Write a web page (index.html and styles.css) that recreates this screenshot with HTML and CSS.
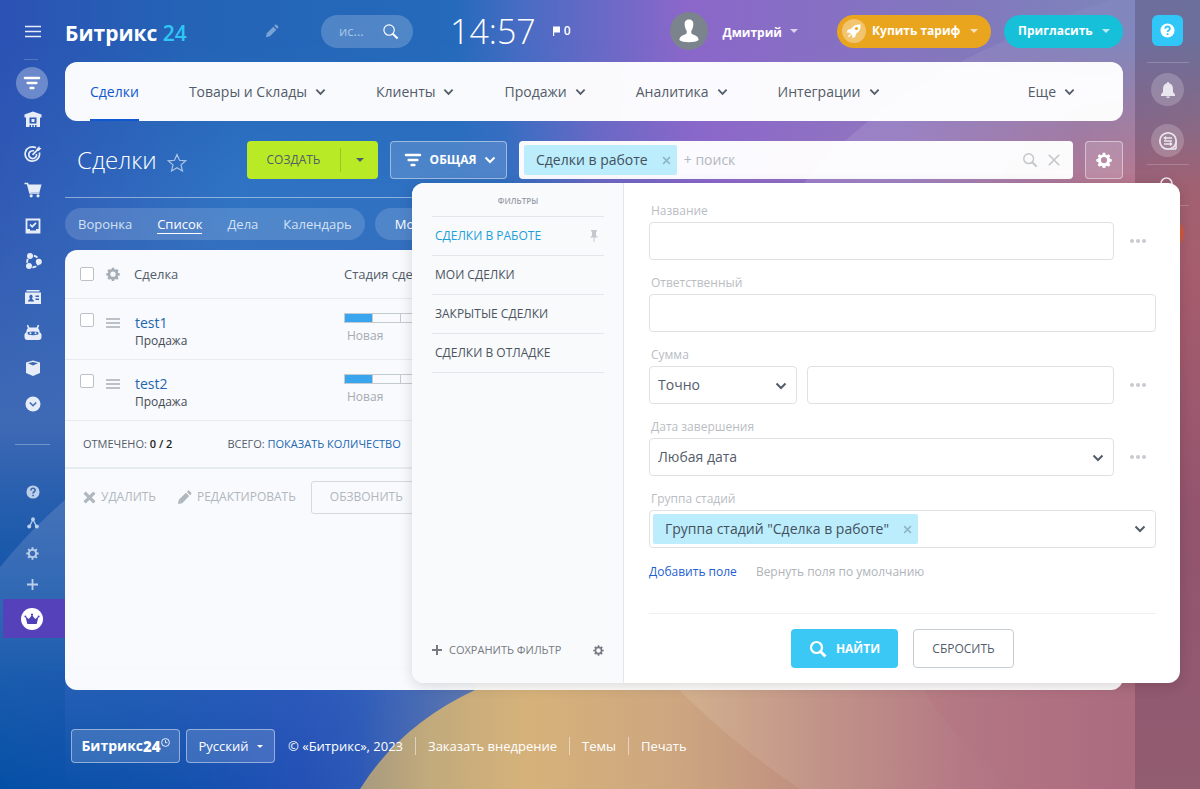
FILE: index.html
```html
<!DOCTYPE html>
<html lang="ru">
<head>
<meta charset="utf-8">
<title>Сделки</title>
<link rel="stylesheet" href="styles.css">
</head>
<body>
<svg class="defs" aria-hidden="true">
  <symbol id="gear" viewBox="0 0 20 20"><path fill-rule="evenodd" fill="currentColor" d="M8.4 1h3.2l.5 2.3 1.6.7 2-1.3 2.2 2.3-1.2 2 .6 1.5 2.400.5v3l-2.400.6-.6 1.500 1.300 2-2.200 2.200-2.100-1.200-1.600.6-.5 2.300H8.400l-.5-2.300-1.600-.6-2 1.200-2.300-2.200 1.300-2-.6-1.500L.4 12V9l2.300-.5.600-1.500L2 5l2.300-2.300 2 1.300 1.600-.7zM10 6.400a3.800 3.800 0 1 0 0 7.600 3.800 3.800 0 0 0 0-7.600z"/></symbol>
  <symbol id="gear-thin" viewBox="0 0 20 20"><circle cx="10" cy="10" r="5.600" fill="none" stroke="currentColor" stroke-width="3"/><path d="M10 .5v4M10 15.500v4M.5 10h4M15.500 10h4M3.300 3.300l2.800 2.800M13.900 13.900l2.800 2.800M3.300 16.700l2.800-2.800M13.900 6.100l2.800-2.800" stroke="currentColor" stroke-width="3"/></symbol>
  <symbol id="chev" viewBox="0 0 12 8"><path d="M1.500 1.500 6 6l4.500-4.500" fill="none" stroke="currentColor" stroke-width="2"/></symbol>
  <symbol id="caret" viewBox="0 0 8 4"><path d="M0 0h8L4 4z" fill="currentColor"/></symbol>
  <symbol id="lens" viewBox="0 0 18 18"><circle cx="7.500" cy="7.500" r="5.500" fill="none" stroke="currentColor" stroke-width="var(--w,1.600)"/><path d="m11.500 11.500 5 5" stroke="currentColor" stroke-width="var(--w2,2.200)"/></symbol>
  <symbol id="cross" viewBox="0 0 12 12"><path d="m1.500 1.500 9 9m0-9-9 9" stroke="currentColor" stroke-width="var(--w,2)"/></symbol>
  <symbol id="funnel" viewBox="0 0 18 14"><path d="M2 2h14M4.700 7h8.600M7.700 12h2.600" stroke="currentColor" stroke-width="2.600" stroke-linecap="round"/></symbol>
  <symbol id="help" viewBox="0 0 16 16"><circle cx="8" cy="8" r="7.500" fill="currentColor"/><path d="M5.600 6.200c.1-3.300 5-3.200 4.900-.2 0 1.700-2.400 1.800-2.400 3.600M8.100 11v1.800" fill="none" stroke="var(--q,#3f69b0)" stroke-width="1.900"/></symbol>
  <symbol id="pencil" viewBox="0 0 16 16"><path d="m1 15 1-4.500L9.500 3 13 6.500 5.500 14zM10.500 2l1.200-1.200q.8-.6 1.500 0l2 2q.6.800 0 1.500L14 5.500z" fill="currentColor"/></symbol>
</svg>

<svg class="art" viewBox="0 0 1200 789" preserveAspectRatio="none" aria-hidden="true">
  <defs>
    <linearGradient id="base" x1="0" y1="0" x2="1" y2="0"><stop offset="0" stop-color="#2c52b4"/><stop offset=".15" stop-color="#2463b6"/><stop offset=".38" stop-color="#256abb"/><stop offset=".43" stop-color="#466cc3"/><stop offset=".57" stop-color="#8b67ca"/><stop offset=".8" stop-color="#8178bd"/><stop offset="1" stop-color="#7d8abc"/></linearGradient>
    <linearGradient id="mid" x1="0" y1="0" x2="1" y2="0"><stop offset="0" stop-color="#305ab5"/><stop offset=".2" stop-color="#3074c4"/><stop offset=".42" stop-color="#2f6fc1"/><stop offset=".5" stop-color="#6c68c4"/><stop offset=".6" stop-color="#8d68ca"/><stop offset=".75" stop-color="#9a78bd"/><stop offset=".9" stop-color="#b2708c"/><stop offset="1" stop-color="#c87a83"/></linearGradient>
    <linearGradient id="fade" x1="0" y1="0" x2="0" y2="1"><stop offset=".05" stop-color="#000"/><stop offset=".25" stop-color="#fff"/></linearGradient>
    <mask id="m"><rect width="1200" height="789" fill="url(#fade)"/></mask>
    <linearGradient id="left" x1="0" y1="0" x2="0" y2="1"><stop offset="0" stop-color="#3d6ab5" stop-opacity="0"/><stop offset=".4" stop-color="#3f6ab5"/><stop offset=".75" stop-color="#2260b0"/><stop offset="1" stop-color="#0450a6"/></linearGradient>
    <linearGradient id="dusk" x1="0" y1="0" x2="0" y2="1"><stop offset="0" stop-color="#0a4fa5" stop-opacity="0"/><stop offset="1" stop-color="#0a4fa5" stop-opacity=".6"/></linearGradient>
    <linearGradient id="arc" x1="0" y1="0" x2="0" y2="1"><stop offset="0" stop-color="#fff" stop-opacity=".08"/><stop offset="1" stop-color="#fff" stop-opacity="0"/></linearGradient>
    <linearGradient id="footx" x1="0" y1="0" x2="500" y2="0" gradientUnits="userSpaceOnUse"><stop offset="0" stop-color="#2450b6" stop-opacity="0"/><stop offset=".25" stop-color="#1a52b2" stop-opacity=".4"/><stop offset=".6" stop-color="#2450b6"/><stop offset=".72" stop-color="#2c58b6"/><stop offset="1" stop-color="#7a84a4"/></linearGradient>
    <linearGradient id="footy" x1="0" y1="670" x2="0" y2="789" gradientUnits="userSpaceOnUse"><stop offset="0" stop-color="#3b6cc4" stop-opacity=".35"/><stop offset="1" stop-color="#3b6cc4" stop-opacity="0"/></linearGradient>
    <linearGradient id="sand" x1="360" y1="0" x2="1200" y2="0" gradientUnits="userSpaceOnUse"><stop offset="0" stop-color="#a79a80"/><stop offset=".08" stop-color="#c1aa7c"/><stop offset=".2" stop-color="#d6b27a"/><stop offset=".38" stop-color="#cda680"/><stop offset=".55" stop-color="#bd8c80"/><stop offset=".72" stop-color="#b37683"/><stop offset=".9" stop-color="#ac6c80"/><stop offset="1" stop-color="#ac6c80"/></linearGradient>
    <linearGradient id="rose" x1="0" y1="0" x2="0" y2="1"><stop offset="0" stop-color="#cd707a" stop-opacity="0"/><stop offset=".22" stop-color="#d0707a"/><stop offset=".6" stop-color="#b5637c"/><stop offset="1" stop-color="#b3707f"/></linearGradient>
    <linearGradient id="edge" x1="0" y1="0" x2="1" y2="0"><stop offset="0" stop-color="#fff" stop-opacity=".12"/><stop offset="1" stop-color="#fff" stop-opacity="0"/></linearGradient>
  </defs>
  <rect width="1200" height="789" fill="url(#base)"/>
  <rect width="1200" height="789" fill="url(#mid)" mask="url(#m)"/>
  <path d="M1110 0C960 50 860 110 790 200H1200V0z" fill="url(#edge)"/>
  <rect y="190" width="500" height="599" fill="url(#left)"/>
  <path d="M0 420V567Q30 530 65 500V420z" fill="url(#dusk)"/>
  <path d="M0 567Q30 530 65 500V680H0z" fill="url(#arc)"/>
  <rect y="670" width="500" height="119" fill="url(#footx)"/>
  <rect x="65" y="670" width="435" height="119" fill="url(#footy)"/>
  <path d="M360 789Q400 725 475 690V670H1200V789z" fill="url(#sand)"/>
  <path d="M660 670Q720 735 800 789H1014Q950 740 912 670z" fill="url(#edge)"/>
  <rect x="1135" y="130" width="65" height="659" fill="url(#rose)"/>
</svg>

<div class="app">
  <nav class="side" aria-label="Главное меню">
    <button class="ico burger" aria-label="Меню"><svg width="18" height="14" viewBox="0 0 18 14"><path d="M1 1.500h16M1 6.500h16M1 11.500h16" stroke="currentColor" stroke-width="1.500"/></svg></button>
    <span class="dash"></span>
    <a class="ico current" href="#" aria-label="CRM"><svg width="18" height="14"><use href="#funnel"/></svg></a>
    <div class="modules">
      <a class="ico" href="#" aria-label="Склад"><svg width="18" height="18" viewBox="0 0 18 18"><path fill-rule="evenodd" fill="currentColor" d="M9 1.500 17.500 4.500v3H16V17h-3.500v-2h-1.500v2H9.700v-2H8.300v2H7v-2H5.500v2H2V7.500H.5v-3zM5.500 7.500v6h7v-6zM7.500 9h3v3h-3z"/></svg></a>
      <a class="ico" href="#" aria-label="Маркетинг"><svg width="18" height="18" viewBox="0 0 18 18"><g fill="none" stroke="currentColor" stroke-width="1.700"><path d="M12 2.800A7.200 7.200 0 1 0 15.400 7.500"/><path d="M10 6a3.900 3.900 0 1 0 2.500 3"/><path d="m8.500 9.800 6-6"/></g><path d="M12.500 4 15.300 1l.3 1.800 1.900.4L14.700 6l-2-.2z" fill="currentColor"/></svg></a>
      <a class="ico" href="#" aria-label="Магазин"><svg width="18" height="16" viewBox="0 0 18 16"><path d="M.5 1.500H3.500L6 11h9.500" fill="none" stroke="currentColor" stroke-width="1.600"/><path d="M3.800 2.500H17.500L15.500 10H6z" fill="currentColor"/><circle cx="7.200" cy="13.800" r="1.600" fill="currentColor"/><circle cx="14" cy="13.800" r="1.600" fill="currentColor"/></svg></a>
      <a class="ico" href="#" aria-label="Задачи"><svg width="16" height="16" viewBox="0 0 16 16"><path d="M1.500 1.500h13v13h-13z" fill="none" stroke="currentColor" stroke-width="1.800"/><path d="m5 6.500 2.200 2.200 3.800-3.900" fill="none" stroke="currentColor" stroke-width="1.700"/><path d="M2 11h3v1.500h6V11h3v3H2z" fill="currentColor"/></svg></a>
      <a class="ico" href="#" aria-label="Автоматизация"><svg width="18" height="18" viewBox="0 0 18 18"><circle cx="9" cy="9.500" r="5.800" fill="none" stroke="currentColor" stroke-width="1.900" stroke-dasharray="4 1.500"/><g fill="currentColor"><circle cx="6" cy="4" r="3"/><circle cx="5" cy="14" r="3"/><circle cx="14.800" cy="9.800" r="3"/></g></svg></a>
      <a class="ico" href="#" aria-label="Контакты"><svg width="18" height="16" viewBox="0 0 18 16"><path fill-rule="evenodd" fill="currentColor" d="M2.500 1h13v1.500h-13zM1 3.500h16V15H1zM4 12.500h6c0-2-2-1.800-2-3 1.200-1 .8-3.700-1-3.700S4.800 8.500 6 9.500c0 1.200-2 1-2 3zM11.500 6.500V8H15V6.500zm0 3V11H15V9.500z"/></svg></a>
      <a class="ico" href="#" aria-label="Роботы"><svg width="18" height="17" viewBox="0 0 18 17"><path d="m3.500 1 1.500 4M14.500 1 13 5" stroke="currentColor" stroke-width="1.600"/><path fill-rule="evenodd" fill="currentColor" d="M5 3.500h8q2.500 1 2.800 5Q18 9 17.500 13q0 3-3 3h-11q-3 0-3-3Q0 9 2.200 8.500 2.500 4.500 5 3.500zM4 8q-1 1.200 0 2.500Q9 12 14 10.500q1-1.300 0-2.500Q9 6.800 4 8z"/><circle cx="6.500" cy="9.300" r="1" fill="currentColor"/><circle cx="11.500" cy="9.300" r="1" fill="currentColor"/></svg></a>
      <a class="ico" href="#" aria-label="Товары"><svg width="16" height="16" viewBox="0 0 16 16"><path fill="currentColor" d="M8 .5 15 2.500V13L8 16 1 13V2.500z"/><path d="M3 3.200 8 5.500l5-2.300L8 2z" fill="#3a66b4"/></svg></a>
      <a class="ico" href="#" aria-label="Ещё"><svg width="16" height="16" viewBox="0 0 16 16"><circle cx="8" cy="8" r="7.500" fill="currentColor"/><path d="m4.800 6.500 3.200 3.200 3.200-3.200" fill="none" stroke="#3f6ab5" stroke-width="1.600"/></svg></a>
    </div>
    <span class="dash wide"></span>
    <div class="tools">
      <a class="ico" href="#" aria-label="Помощь"><svg width="14" height="14"><use href="#help"/></svg></a>
      <a class="ico" href="#" aria-label="Карта"><svg width="12" height="12" viewBox="0 0 12 12"><path d="M2.500 9.500 6 2.500l3.500 7" fill="none" stroke="currentColor" stroke-width="1.300"/><g fill="currentColor"><circle cx="6" cy="2.200" r="1.900"/><circle cx="2.200" cy="9.600" r="2"/><circle cx="9.800" cy="9.600" r="2"/></g></svg></a>
      <a class="ico" href="#" aria-label="Настройки"><svg width="13" height="13"><use href="#gear-thin"/></svg></a>
      <a class="ico" href="#" aria-label="Добавить"><svg width="11" height="11" viewBox="0 0 11 11"><path d="M5.500 0v11M0 5.500h11" stroke="currentColor" stroke-width="1.800"/></svg></a>
    </div>
    <a class="premium" href="#" aria-label="Тариф"><svg width="22" height="22" viewBox="0 0 22 22"><circle cx="11" cy="11" r="11" fill="#fff"/><path d="m4.500 8.500 3.300 2.500L11 7l3.200 4 3.300-2.500-1.800 7.500H6.300z" fill="#5040b8"/><circle cx="4.400" cy="8.500" r="1" fill="#5040b8"/><circle cx="11" cy="6.700" r="1.100" fill="#5040b8"/><circle cx="17.600" cy="8.500" r="1" fill="#5040b8"/></svg></a>
  </nav>

  <main class="main">
    <header class="top">
      <div class="brand"><a class="logo" href="#">Битрикс <span>24</span></a>
        <button class="plain edit" aria-label="Изменить"><svg width="14" height="14"><use href="#pencil"/></svg></button></div>
      <label class="find"><input type="search" placeholder="ис..." aria-label="искать"><svg width="17" height="17"><use href="#lens"/></svg></label>
      <time class="clock">14:57</time>
      <span class="flag"><svg width="7" height="10" viewBox="0 0 7 10"><path d="M0 .5h7v6H1.200V10H0z" fill="#fff"/></svg>0</span>
      <div class="account">
        <button class="user"><svg width="38" height="38" viewBox="0 0 38 38"><circle cx="19" cy="19" r="19" fill="#7b848c"/><path d="M19 7.500c-3.500 0-4.700 2.500-4.300 5.500.3 3 1.300 5 2 5.800v2.400c-1.500 2-7.300 2-7.300 6.800 3 3 16.300 3 19.200 0 0-4.800-5.800-4.800-7.300-6.800v-2.400c.8-.8 1.700-2.800 2-5.800.4-3-.8-5.500-4.300-5.500z" fill="#fff"/></svg><span>Дмитрий</span><svg class="car" width="8" height="4"><use href="#caret"/></svg></button>
        <button class="pill buy"><svg width="24" height="24" viewBox="0 0 24 24"><circle cx="12" cy="12" r="12" fill="#fff" opacity=".35"/><path d="M18.500 5.500c-5-.5-8 2-9.500 4.500l-3 .5-1.500 3 3 .3 2.500 2.500.5 3 2.800-1.500.7-3c3-2 5-4.500 4.500-9.300zM7.500 15l-2 3.500L9 16.700z" fill="#fff"/><circle cx="14.500" cy="9.500" r="1.600" fill="#eda41f"/></svg><span>Купить тариф</span><svg class="car" width="8" height="4"><use href="#caret"/></svg></button>
        <button class="pill invite"><span>Пригласить</span><svg class="car" width="8" height="4"><use href="#caret"/></svg></button>
      </div>
    </header>

    <nav class="menu" aria-label="Разделы CRM">
      <a class="on" href="#">Сделки</a>
      <a href="#">Товары и Склады<svg width="11" height="8"><use href="#chev"/></svg></a>
      <a href="#">Клиенты<svg width="11" height="8"><use href="#chev"/></svg></a>
      <a href="#">Продажи<svg width="11" height="8"><use href="#chev"/></svg></a>
      <a href="#">Аналитика<svg width="11" height="8"><use href="#chev"/></svg></a>
      <a href="#">Интеграции<svg width="11" height="8"><use href="#chev"/></svg></a>
      <a class="last" href="#">Еще<svg width="11" height="8"><use href="#chev"/></svg></a>
    </nav>

    <div class="bar">
      <div class="heading"><h1>Сделки</h1>
        <button class="plain star" aria-label="В избранное"><svg width="20" height="20" viewBox="0 0 20 20"><path d="m10 1.500 2.500 5.800 6.200.5-4.700 4.100 1.500 6.200L10 14.800l-5.500 3.300L6 11.900 1.300 7.800l6.200-.5z" fill="none" stroke="currentColor" stroke-width="1.200"/></svg></button></div>
      <div class="create"><button>СОЗДАТЬ</button><button class="more" aria-label="Ещё варианты"><svg width="8" height="4"><use href="#caret"/></svg></button></div>
      <button class="ghost funnel"><svg width="18" height="14"><use href="#funnel"/></svg>ОБЩАЯ<svg width="12" height="8"><use href="#chev"/></svg></button>
      <div class="searchbox">
        <div class="searchline">
          <span class="tag">Сделки в работе<button class="plain" aria-label="Убрать"><svg width="9" height="9"><use href="#cross"/></svg></button></span>
          <input type="text" placeholder="+ поиск" aria-label="Поиск">
          <button class="plain" aria-label="Искать"><svg width="16" height="16"><use href="#lens"/></svg></button>
          <button class="plain thin" aria-label="Очистить"><svg width="14" height="14"><use href="#cross"/></svg></button>
        </div>

        <section class="popup" aria-label="Фильтр">
          <aside class="presets">
            <h2>ФИЛЬТРЫ</h2>
            <ul>
              <li class="on"><a href="#">СДЕЛКИ В РАБОТЕ</a><svg width="8" height="14" viewBox="0 0 8 14"><path d="M1 1h6v1.500H6v4l2 2H0l2-2v-4H1zM3.500 8h1v5h-1z" fill="currentColor"/></svg></li>
              <li><a href="#">МОИ СДЕЛКИ</a></li>
              <li><a href="#">ЗАКРЫТЫЕ СДЕЛКИ</a></li>
              <li><a href="#">СДЕЛКИ В ОТЛАДКЕ</a></li>
            </ul>
            <div class="save"><button class="plain"><svg width="10" height="10" viewBox="0 0 10 10"><path d="M5 0v10M0 5h10" stroke="currentColor" stroke-width="2"/></svg>СОХРАНИТЬ ФИЛЬТР</button><button class="plain" aria-label="Настройки фильтра"><svg width="11" height="11"><use href="#gear-thin"/></svg></button></div>
          </aside>
          <form class="fields">
            <div class="field"><label for="f1">Название</label><div class="line"><input id="f1" type="text"><button type="button" class="plain dots" aria-label="Ещё"><i></i><i></i><i></i></button></div></div>
            <div class="field"><label for="f2">Ответственный</label><div class="line"><input id="f2" type="text"></div></div>
            <div class="field"><label for="f3">Сумма</label><div class="line"><span class="pick small"><select id="f3"><option>Точно</option></select><svg width="12" height="8"><use href="#chev"/></svg></span><input type="text" aria-label="Значение суммы"><button type="button" class="plain dots" aria-label="Ещё"><i></i><i></i><i></i></button></div></div>
            <div class="field"><label for="f4">Дата завершения</label><div class="line"><span class="pick"><select id="f4"><option>Любая дата</option></select><svg width="12" height="8"><use href="#chev"/></svg></span><button type="button" class="plain dots" aria-label="Ещё"><i></i><i></i><i></i></button></div></div>
            <div class="field"><label for="f5">Группа стадий</label><div class="line"><div class="multi"><span class="tag">Группа стадий "Сделка в работе"<button type="button" class="plain" aria-label="Убрать"><svg width="9" height="9"><use href="#cross"/></svg></button></span><button type="button" id="f5" class="plain drop" aria-label="Открыть список"><svg width="12" height="8"><use href="#chev"/></svg></button></div></div></div>
            <div class="links"><a href="#">Добавить поле</a><a class="mute" href="#">Вернуть поля по умолчанию</a></div>
            <div class="submit"><button type="button" class="go"><svg width="18" height="18"><use href="#lens"/></svg>НАЙТИ</button><button type="reset" class="reset">СБРОСИТЬ</button></div>
          </form>
        </section>
      </div>
      <button class="ghost cog" aria-label="Настройки"><svg width="16" height="16"><use href="#gear"/></svg></button>
    </div>

    <div class="views">
      <nav class="tabs"><a href="#">Воронка</a><a class="on" href="#">Список</a><a href="#">Дела</a><a href="#">Календарь</a></nav>
      <nav class="tabs second"><a class="bright" href="#">Мои</a></nav>
    </div>

    <section class="panel">
      <table class="deals">
        <colgroup><col class="c1"><col class="c2"><col class="c3"><col></colgroup>
        <thead><tr><th><input type="checkbox" aria-label="Выбрать все"></th><th><svg class="tgear" width="14" height="14"><use href="#gear"/></svg></th><th>Сделка</th><th>Стадия сделки</th></tr></thead>
        <tbody>
          <tr><td><input type="checkbox" aria-label="test1"></td><td><span class="lines"></span></td><td><a href="#">test1</a><small>Продажа</small></td><td><span class="stage"><i class="full"></i><i></i><i></i><i></i><i></i></span><em>Новая</em></td></tr>
          <tr><td><input type="checkbox" aria-label="test2"></td><td><span class="lines"></span></td><td><a href="#">test2</a><small>Продажа</small></td><td><span class="stage"><i class="full"></i><i></i><i></i><i></i><i></i></span><em>Новая</em></td></tr>
        </tbody>
      </table>
      <div class="totals"><span>ОТМЕЧЕНО: <b>0 / 2</b></span><span>ВСЕГО: <a href="#">ПОКАЗАТЬ КОЛИЧЕСТВО</a></span></div>
      <div class="actions">
        <button class="plain"><svg class="fat" width="13" height="13"><use href="#cross"/></svg>УДАЛИТЬ</button>
        <button class="plain"><svg width="15" height="15"><use href="#pencil"/></svg>РЕДАКТИРОВАТЬ</button>
        <button class="call">ОБЗВОНИТЬ</button>
      </div>
    </section>

    <footer class="foot">
      <a class="ghost b24" href="#">Битрикс<b>24</b><svg width="9" height="9" viewBox="0 0 9 9"><circle cx="4.500" cy="4.500" r="3.900" fill="none" stroke="#fff" stroke-width=".9"/><path d="M4.500 2.300v2.400h1.800" fill="none" stroke="#fff" stroke-width=".9"/></svg></a>
      <button class="ghost lang">Русский<svg width="6" height="3"><use href="#caret"/></svg></button>
      <span class="copy">© «Битрикс», 2023</span>
      <a href="#">Заказать внедрение</a><a href="#">Темы</a><a href="#">Печать</a>
    </footer>
  </main>

  <aside class="right">
    <button class="helpbtn" aria-label="Помощь"><svg width="15" height="15"><use href="#help"/></svg></button>
    <span class="rule"></span>
    <button class="round" aria-label="Уведомления"><svg width="14" height="16" viewBox="0 0 14 16"><path d="M7 0q1 0 1.200 1.300Q12 2.500 12 7v3l2 2.500V14H0v-1.500L2 10V7q0-4.500 3.800-5.700Q6 0 7 0zM5 14.500h4Q8.500 16 7 16t-2-1.500z" fill="currentColor"/></svg></button>
    <button class="round" aria-label="Сообщения"><svg width="20" height="20" viewBox="0 0 20 20"><path d="M18 18h-5.500M18 18v-7" stroke="currentColor" stroke-width="1.600"/><circle cx="10" cy="10" r="8.200" fill="none" stroke="currentColor" stroke-width="1.800"/><path d="M6.500 7H14M6 10h8M6 13h7.500M8 5.500 6.300 7 8 8.500M12 11.500l1.700 1.500-1.700 1.500" fill="none" stroke="currentColor" stroke-width="1.300"/></svg></button>
    <span class="rule"></span>
    <button class="plain rs" aria-label="Поиск"><svg width="18" height="18"><use href="#lens"/></svg></button>
    <span class="rule"></span>
    <span class="contact"></span>
  </aside>
</div>
</body>
</html>
```
FILE: styles.css
```css
* { box-sizing: border-box; }
body {
  margin: 0;
  font-family: "Open Sans", "Noto Sans", sans-serif;
  font-size: 13px;
  line-height: 18px;
  color: #535c69;
  background: #2c62b6;
}
a { color: inherit; text-decoration: none; }
button, input, select { font: inherit; color: inherit; margin: 0; }
button { border: 0; cursor: pointer; padding: 0; background: none; white-space: nowrap; }
svg { display: block; flex: none; }
ul { list-style: none; margin: 0; padding: 0; }
i, em { font-style: normal; }
.defs { position: absolute; width: 0; height: 0; }
.art { position: absolute; top: 0; left: 0; width: 100%; height: 100%; z-index: -1; }
.plain { display: inline-flex; align-items: center; }

.app { display: grid; grid-template-columns: 65px minmax(0, 1fr) 65px; min-height: 100vh; }

/* left sidebar */
.side { display: flex; flex-direction: column; color: #e6edf8; }
.ico { display: flex; align-items: center; justify-content: center; color: inherit; }
.burger { height: 28px; margin-top: 18px; width: 65px; }
.dash { height: 1px; width: 14px; margin: 13px auto 7px 24px; background: rgba(255,255,255,.2); }
.dash.wide { width: 35px; margin: 22px auto 0 15px; background: rgba(255,255,255,.3); }
.current { width: 32px; height: 32px; margin: 0 16px; border-radius: 50%; background: rgba(255,255,255,.3); color: #fff; }
.modules { display: grid; grid-auto-rows: 1fr; height: 321px; margin-top: 2px; }
.tools { display: grid; grid-auto-rows: 31px; margin-top: 31px; color: #bccfe9; }
.premium { display: flex; align-items: center; height: 39px; margin: -1px 0 0 3px; padding-left: 18px; background: #5542ba; }

/* header */
.main { padding-right: 12px; }
.top { display: flex; align-items: center; height: 62px; color: #fff; }
.brand { display: flex; align-items: center; justify-content: space-between; width: 256px; padding-right: 42px; }
.logo { font-size: 21px; line-height: 32px; font-weight: 700; padding-top: 4px; }
.logo span { color: #2fc6f6; font-weight: 600; }
.edit { color: rgba(255,255,255,.4); }
.find { display: flex; align-items: center; width: 92px; height: 33px; border-radius: 17px; padding: 0 14px 0 18px; background: rgba(255,255,255,.2); }
.find input { width: 43px; border: 0; padding: 0; background: none; outline: 0; }
.find input::placeholder { color: #a9c5e6; opacity: 1; }
.find svg { --w: 1.2; }
.clock { margin-left: 37px; font-size: 34px; line-height: 40px; font-weight: 300; }
.flag { display: flex; align-items: center; gap: 4px; margin-left: 17px; font-size: 12px; line-height: 12px; font-weight: 600; }
.account { display: flex; align-items: center; margin-left: auto; font-weight: 700; font-size: 12px; }
.user { display: flex; align-items: center; margin-right: 39px; }
.user span { margin: 4px 8px 0 15px; }
.car { opacity: .7; }
.pill { display: flex; align-items: center; height: 33px; border-radius: 17px; }
.buy { width: 154px; padding-left: 5px; gap: 6px; background: #eaa51f; }
.buy .car, .invite .car { margin: 0 13px 0 auto; }
.invite { width: 119px; margin-left: 13px; padding-left: 14px; background: #16c0d8; }

/* section menu */
.menu { display: flex; gap: 50px; height: 59px; padding: 0 48px 0 25px; border-radius: 12px; background: rgba(255,255,255,.97); font-size: 14px; font-weight: 500; }
.menu a { display: flex; align-items: center; gap: 8px; }
.menu .on { color: #1058d0; box-shadow: inset 0 -2px #1058d0; }
.menu .last { margin-left: auto; }

/* toolbar */
.bar { display: flex; gap: 12px; height: 77px; padding: 20px 0 18px; border-bottom: 1px solid rgba(255,255,255,.45); }
.heading { display: flex; align-items: center; width: 170px; padding-left: 12px; color: #fff; }
h1 { margin: 0; font-size: 24px; line-height: 32px; font-weight: 300; }
.star { margin-left: 10px; padding-top: 5px; color: rgba(255,255,255,.6); }
.create { display: flex; width: 131px; border-radius: 4px; background: #b8ea26; font-size: 12px; color: #535c69; }
.create button { flex: 1; }
.create .more { flex: none; width: 38px; margin: 7px 0; display: flex; align-items: center; justify-content: center; border-left: 1px solid #9cc722; }
.ghost { display: flex; align-items: center; color: #fff; border: 1px solid rgba(255,255,255,.45); border-radius: 4px; background: rgba(255,255,255,.15); }
.funnel { width: 117px; padding: 0 10px 0 13px; justify-content: space-between; font-size: 12px; font-weight: 700; }
.cog { width: 38px; justify-content: center; }
.searchbox { flex: 1; position: relative; }
.searchline { display: flex; align-items: center; height: 38px; padding: 4px 12px 4px 5px; border-radius: 4px; background: rgba(255,255,255,.97); color: #c2c5ca; }
.searchline input { flex: 1; min-width: 0; border: 0; padding: 0 0 0 7px; background: none; outline: 0; font-size: 14px; }
.searchline input::placeholder { color: #b3b7bd; opacity: 1; }
.thin { margin-left: 9px; --w: 1.3; }
.tag { display: inline-flex; align-items: center; height: 30px; padding: 0 6px 0 12px; gap: 14px; border-radius: 2px; background: #bbedfc; color: #43505c; font-size: 14px; white-space: nowrap; }
.tag button { color: #8fb4c2; }

/* filter popup */
.popup { position: absolute; z-index: 2; top: 42px; left: -107px; right: -107px; display: flex; min-height: 498px; border-radius: 12px; overflow: hidden; background: #fff; box-shadow: 0 3px 14px rgba(0,0,0,.14); }
.presets { display: flex; flex-direction: column; width: 212px; padding: 13px 19px 24px 20px; background: #f9fafc; border-right: 1px solid #e3e6ea; }
h2 { margin: 0; padding-bottom: 10px; text-align: center; font-size: 8px; line-height: 10px; font-weight: 600; color: #98a0a8; border-bottom: 1px solid #e3e6ea; }
.presets li { display: flex; align-items: center; justify-content: space-between; height: 39px; padding: 0 6px 0 3px; border-bottom: 1px solid #e3e6ea; font-size: 12px; font-weight: 500; color: #4b545f; }
.presets .on { color: #1d9fd8; }
.presets li svg { color: #c4c8cc; }
.save { display: flex; justify-content: space-between; margin-top: auto; font-size: 11px; color: #767b82; }
.save .plain { gap: 7px; }
.fields { flex: 1; padding: 20px 24px 15px 25px; }
.field label { display: block; padding-left: 2px; line-height: 16px; font-size: 12px; color: #b9bdc3; margin-bottom: 3px; }
.field { margin-bottom: 15px; }
.line { display: flex; height: 38px; }
.line > input, .multi, select { flex: 1; min-width: 0; width: 100%; border: 1px solid #dfe1e4; border-radius: 4px; background: #fff; padding: 0 8px; outline: 0; }
.pick { display: flex; flex: 1; position: relative; }
.pick.small { flex: none; width: 148px; margin-right: 10px; }
.pick select { appearance: none; font-size: 14px; }
.pick svg { position: absolute; right: 10px; top: 16px; pointer-events: none; }
.dots { width: 42px; gap: 2px; justify-content: center; padding-left: 6px; }
.dots i { width: 4px; height: 4px; border-radius: 50%; background: #c8cbcf; }
.multi { display: flex; align-items: center; padding: 3px; }
.drop { margin-left: auto; padding: 0 6px; }
.links { display: flex; gap: 19px; margin-top: 15px; font-size: 12px; color: #1d60d0; }
.links .mute { color: #b0b4ba; }
.submit { display: flex; justify-content: center; gap: 15px; margin-top: 32px; padding-top: 15px; border-top: 1px solid #eef0f2; font-size: 12px; }
.submit button { height: 39px; border-radius: 4px; }
.go { display: flex; align-items: center; justify-content: center; gap: 9px; width: 107px; background: #3bc8f5; color: #fff; font-weight: 700; --w: 2.2; --w2: 3; }
.reset { width: 101px; border: 1px solid #c6cdd3; font-weight: 500; }

/* view tabs */
.views { display: flex; gap: 10px; padding: 10px 0; }
.tabs { display: flex; align-items: center; gap: 25px; height: 32px; padding: 0 13px; border-radius: 16px; background: rgba(255,255,255,.15); color: #d3e1f3; font-weight: 500; }
.tabs .on { color: #fff; box-shadow: 0 1px #fff; }
.second { padding: 0 20px; }
.bright { color: #fff; }

/* deals */
.panel { min-height: 440px; border-radius: 12px; background: rgba(255,255,255,.97); overflow: hidden; }
.deals { width: 100%; border-collapse: collapse; table-layout: fixed; }
.c1 { width: 41px; } .c2 { width: 28px; } .c3 { width: 210px; }
th, td { padding: 0; text-align: left; vertical-align: top; border-bottom: 1px solid #e6ebf0; }
th { height: 48px; vertical-align: middle; font-weight: 400; }
td { height: 61px; padding-top: 14px; }
td:nth-child(3) { padding: 15px 0 0 1px; font-size: 14px; color: #2067b0; }
.deals input { display: block; appearance: none; width: 14px; height: 14px; margin: 0 0 0 15px; border: 1px solid #bcc1c7; border-radius: 2px; background: #fff; }
.tgear { color: #a5adb5; }
.lines { display: block; width: 14px; height: 10px; margin-top: 5px; border: solid #bcc1c9; border-width: 2px 0; background: linear-gradient(#bcc1c9, #bcc1c9) 0 2px / 14px 2px no-repeat; }
small { display: block; font-size: 12px; line-height: 17px; color: #454c55; }
.stage { display: flex; width: 141px; height: 10px; border: 1px solid #c3cad0; }
.stage i { flex: 1; border-right: 1px solid #c3cad0; }
.stage .full { background: #39a5ef; }
em { display: block; margin-top: 4px; padding-left: 3px; font-size: 12px; color: #a3aab1; }
.totals { display: flex; gap: 55px; height: 48px; align-items: center; padding-left: 18px; font-size: 11px; border-bottom: 2px solid #e6ebf0; }
.totals b { color: #222; font-weight: 600; }
.totals a { color: #2067b0; }
.actions { display: flex; gap: 21px; align-items: center; padding: 12px 18px; font-size: 12px; color: #b1b7be; }
.actions .plain { gap: 5px; }
.fat { --w: 3; color: #b1b7be; }
.call { height: 33px; padding: 0 18px; margin-left: -6px; border: 1px solid #d5dade; border-radius: 3px; }

/* footer */
.foot { display: flex; align-items: center; padding: 39px 6px 26px; color: #fff; font-weight: 500; font-size: 13px; }
.foot > a:not(.ghost) { padding: 0 12px; border-left: 1px solid rgba(255,255,255,.5); }
.foot .ghost { height: 34px; }
.b24 { width: 109px; justify-content: center; font-size: 14px; font-weight: 700; }
.b24 b { font-size: 15px; }
.b24 svg { margin-bottom: 8px; }
.lang { width: 89px; margin-left: 6px; justify-content: center; gap: 8px; }
.copy { margin: 0 12px 0 13px; }

/* right rail */
.right { display: flex; flex-direction: column; align-items: center; padding-top: 15px; background: rgba(70,50,80,.3); color: #e9e6ee; }
.helpbtn { display: flex; align-items: center; justify-content: center; width: 31px; height: 31px; border-radius: 6px; background: #30c6f7; color: #fff; --q: #30c6f7; }
.rule { width: 42px; height: 1px; margin: 16px 0 10px; background: rgba(255,255,255,.2); }
.round { display: flex; align-items: center; justify-content: center; width: 33px; height: 33px; border-radius: 50%; background: rgba(255,255,255,.2); }
.round + .round { margin-top: 18px; }
.round + .rule { margin-top: 7px; margin-bottom: 11px; }
.rs + .rule { margin: 11px 0; }
.contact { width: 33px; height: 33px; border-radius: 50%; background: #cd5940; }
```
